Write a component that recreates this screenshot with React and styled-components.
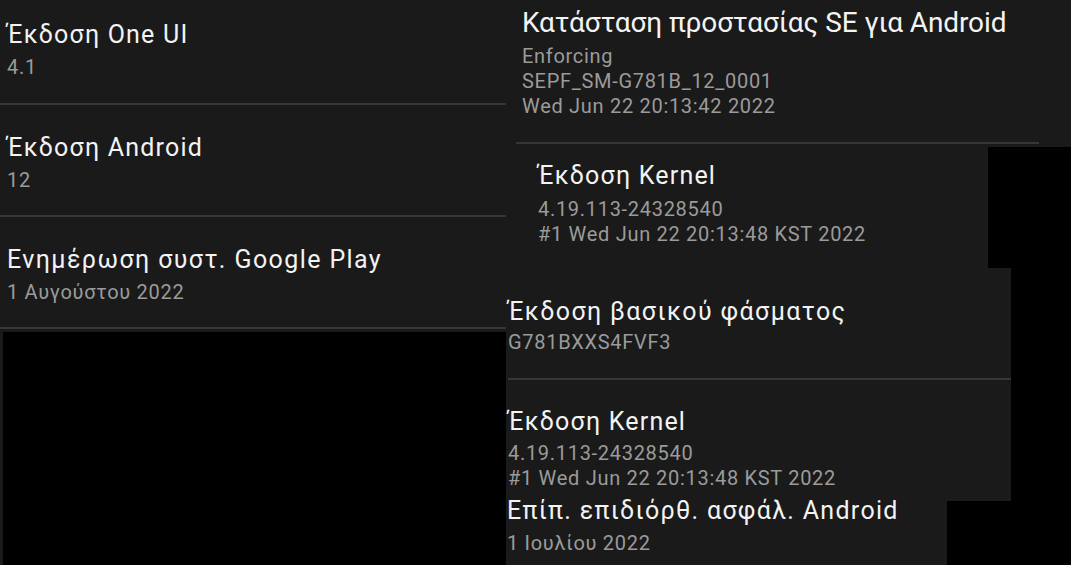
import React from "react";
import styled, { createGlobalStyle } from "styled-components";

const Global = createGlobalStyle`
  html, body { margin: 0; padding: 0; background: #000; }
  body { font-family: Roboto, "Noto Sans", "DejaVu Sans", sans-serif; }
`;

const Page = styled.div`
  width: 1071px;
  height: 565px;
  overflow: hidden;
  background: #000;
  display: flex;
`;

const LeftColumn = styled.div`
  width: 506px;
  flex: none;
  display: flex;
  flex-direction: column;
  background: #1a1a1a;
`;

const RightColumn = styled.div`
  flex: 1;
  display: flex;
  flex-direction: column;
  align-items: flex-start;
`;

const Row = styled.div`
  box-sizing: border-box;
  width: 510px;
  height: ${(p) => p.$height}px;
  padding: ${(p) => p.$top}px 0 0 7px;
  border-bottom: 2px solid #363636;
`;

const BlackFill = styled.div`
  flex: 1;
  margin: 3px 0 0 3px;
  background: #000;
`;

const Panel = styled.div`
  box-sizing: border-box;
  width: ${(p) => p.$width}px;
  height: ${(p) => p.$height}px;
  padding: ${(p) => p.$top}px 0 0 ${(p) => p.$left}px;
  background: #1a1a1a;
  display: flex;
  flex-direction: column;
  flex: none;
`;

const Title = styled.div`
  font-size: ${(p) => p.$size || 25}px;
  line-height: ${(p) => p.$lh || 30}px;
  letter-spacing: ${(p) => (p.$ls ?? 1.2)}px;
  margin-top: ${(p) => p.$mt || 0}px;
  color: #f3f3f3;
  white-space: nowrap;
`;

const Sub = styled.div`
  font-size: 20px;
  line-height: 25px;
  letter-spacing: 0.7px;
  color: #9b9b9b;
  margin-top: ${(p) => p.$gap || 0}px;
  white-space: nowrap;
`;

const Divider = styled.div`
  height: 2px;
  background: #363636;
  width: ${(p) => p.$width}px;
  margin: ${(p) => p.$mt}px 0 ${(p) => p.$mb || 0}px ${(p) => p.$ml}px;
  flex: none;
`;

const Spacer = styled.div`
  flex: 1;
`;

export default function App() {
  return (
    <>
      <Global />
      <Page>
        <LeftColumn>
          <Row $height={105} $top={20}>
            <Title>Έκδοση One UI</Title>
            <Sub $gap={5}>4.1</Sub>
          </Row>
          <Row $height={112} $top={28}>
            <Title>Έκδοση Android</Title>
            <Sub $gap={5}>12</Sub>
          </Row>
          <Row $height={112} $top={28}>
            <Title $ls={1.4}>Ενημέρωση συστ. Google Play</Title>
            <Sub $gap={5}>1 Αυγούστου 2022</Sub>
          </Row>
          <BlackFill />
        </LeftColumn>
        <RightColumn>
          <Panel $width={565} $height={147} $top={6} $left={16}>
            <Title $size={28} $lh={34} $ls={-0.1}>
              Κατάσταση προστασίας SE για Android
            </Title>
            <Sub $gap={4}>Enforcing</Sub>
            <Sub>SEPF_SM-G781B_12_0001</Sub>
            <Sub>Wed Jun 22 20:13:42 2022</Sub>
            <Spacer />
            <Divider $width={523} $mt={0} $mb={3} $ml={-6} />
          </Panel>
          <Panel $width={482} $height={121} $top={14} $left={32}>
            <Title>Έκδοση Kernel</Title>
            <Sub $gap={6}>4.19.113-24328540</Sub>
            <Sub>#1 Wed Jun 22 20:13:48 KST 2022</Sub>
          </Panel>
          <Panel $width={505} $height={233} $top={29} $left={2}>
            <Title $ls={1.4}>Έκδοση βασικού φάσματος</Title>
            <Sub $gap={3}>G781BXXS4FVF3</Sub>
            <Divider $width={503} $mt={23} $ml={0} />
            <Title $mt={27}>Έκδοση Kernel</Title>
            <Sub $gap={4}>4.19.113-24328540</Sub>
            <Sub>#1 Wed Jun 22 20:13:48 KST 2022</Sub>
          </Panel>
          <Panel $width={441} $height={64} $top={0} $left={1}>
            <Title $lh={20} $ls={1.3}>Επίπ. επιδιόρθ. ασφάλ. Android</Title>
            <Sub $gap={10}>1 Ιουλίου 2022</Sub>
          </Panel>
        </RightColumn>
      </Page>
    </>
  );
}
